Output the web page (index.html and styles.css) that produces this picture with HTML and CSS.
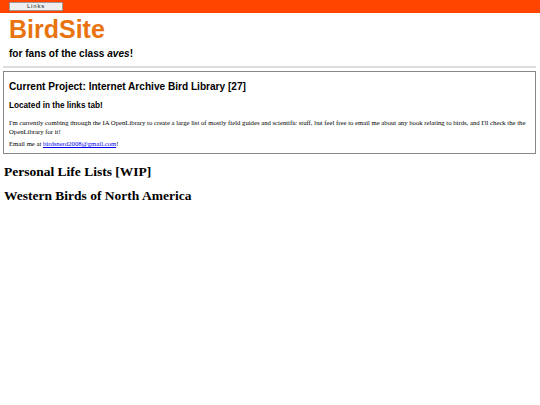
FILE: index.html
```html
<!DOCTYPE html>
<html lang="en">
<head>
    <meta charset="UTF-8">
    <meta name="viewport" content="width=device-width, initial-scale=1.0">
    <title>BirdSite</title>
    <link rel="stylesheet" href="styles.css">
</head>
<body>
    <div class="topbar">
        <button class="tab-btn">Links</button>
    </div>

    <div class="header">
        <h1 class="logo">BirdSite</h1>
        <p class="tagline">for fans of the class <em>aves</em>!</p>
    </div>

    <div class="main">
        <hr class="divider">

        <div class="project-box">
            <h2>Current Project: Internet Archive Bird Library [27]</h2>
            <h3>Located in the links tab!</h3>
            <p>I'm currently combing through the IA OpenLibrary to create a large list of mostly field guides and scientific stuff, but feel free to email me about any book relating to birds, and I'll check the the OpenLibrary for it!</p>
            <p class="contact">Email me at <a href="mailto:birdsnerd2008@gmail.com">birdsnerd2008@gmail.com</a>!</p>
        </div>

        <h2 class="section-title">Personal Life Lists [WIP]</h2>
        <h2 class="section-title">Western Birds of North America</h2>
    </div>
</body>
</html>
```

FILE: styles.css
```css
body {
    margin: 0;
    background-color: #fff;
    color: #000;
    font-family: "Liberation Serif", "Times New Roman", serif;
}
.topbar {
    background-color: #ff4500;
    height: 13px;
    padding: 2px 9px 0;
    box-sizing: border-box;
}
.tab-btn {
    display: block;
    width: 54px;
    height: 9px;
    padding: 0;
    background-color: #efefef;
    border: 1px solid #999;
    border-radius: 1px;
    font-family: "Liberation Sans", Arial, sans-serif;
    font-size: 6px;
    line-height: 7px;
    letter-spacing: 0.8px;
    color: #222;
}
.header {
    padding: 4px 9px 0;
    font-family: "Liberation Sans", Arial, sans-serif;
}
.logo {
    margin: 0;
    font-size: 25px;
    line-height: 25px;
    color: #e8730f;
}
.tagline {
    margin: 6px 0 0;
    font-size: 10.1px;
    line-height: 12px;
    font-weight: bold;
}
.main {
    padding: 0 4px 0 3px;
}
.divider {
    margin: 6px 0 0;
    height: 0;
    border: none;
    border-top: 2px solid #ddd;
}
.project-box {
    margin-top: 3px;
    border: 1px solid #888;
    padding: 6px 4px 5px 5px;
    font-family: "Liberation Sans", Arial, sans-serif;
}
.project-box h2 {
    margin: 3px 0 0;
    font-size: 10.1px;
    line-height: 12px;
}
.project-box h3 {
    margin: 8px 0 0;
    font-size: 8.2px;
    line-height: 10px;
}
.project-box p {
    margin: 7px 0 0;
    font-family: "Liberation Serif", "Times New Roman", serif;
    font-size: 6.7px;
    line-height: 9px;
}
.project-box .contact {
    margin-top: 3px;
}
.project-box a {
    color: #00e;
}
.section-title {
    margin: 10px 0 0 1px;
    font-size: 13.5px;
    line-height: 15px;
}
.section-title + .section-title {
    margin-top: 9px;
}
```
